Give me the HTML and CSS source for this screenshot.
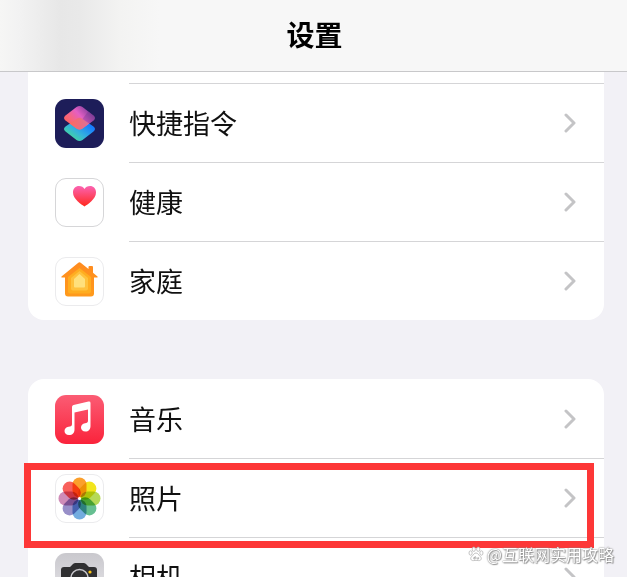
FILE: index.html
```html
<!DOCTYPE html>
<html lang="zh-CN">
<head>
    <meta charset="UTF-8">
    <meta name="viewport" content="width=device-width, initial-scale=1.0">
    <title>设置</title>
    <link rel="stylesheet" href="styles.css">
</head>
<body>
    <header class="navbar">
        <h1>设置</h1>
    </header>

    <main class="settings">
        <section class="group group-continued">
            <a class="row" href="#shortcuts">
                <svg class="app-icon" viewBox="0 0 49 49" aria-hidden="true">
                    <defs>
                        <linearGradient id="scTop" x1="0" y1=".8" x2=".9" y2=".2">
                            <stop offset="0" stop-color="#ff6052"/>
                            <stop offset=".3" stop-color="#f8657c"/>
                            <stop offset=".6" stop-color="#e45fc4"/>
                            <stop offset="1" stop-color="#7a3c98"/>
                        </linearGradient>
                        <linearGradient id="scBottom" x1=".2" y1=".9" x2=".8" y2=".3">
                            <stop offset="0" stop-color="#45d99a"/>
                            <stop offset=".45" stop-color="#35b3dc"/>
                            <stop offset="1" stop-color="#167cff"/>
                        </linearGradient>
                        <linearGradient id="scMix" x1="0" y1="0" x2="1" y2="0">
                            <stop offset="0" stop-color="#ff6a5e"/>
                            <stop offset="1" stop-color="#d9709c"/>
                        </linearGradient>
                    </defs>
                    <rect width="49" height="49" rx="11" fill="#1d1d59"/>
                    <path d="M21.500 20 L10.500 27.500 Q7.500 30 10.500 32.500 L21.500 41 Q24.500 43.200 27.500 41 L38.500 32.500 Q41.500 30 38.500 27.500 L27.500 20 Q24.500 17.800 21.500 20Z" fill="url(#scBottom)"/>
                    <path d="M21.500 8 L10.500 16.500 Q7.500 19 10.500 21.500 L21.500 29.500 Q24.500 31.500 27.500 29.500 L38.500 21.500 Q41.500 19 38.500 16.500 L27.500 8 Q24.500 5.800 21.500 8Z" fill="url(#scTop)"/>
                    <path d="M24.500 18.800 Q26 18.800 27.500 20 L34.200 24.600 L27.500 29.500 Q24.500 31.500 21.500 29.500 L14.800 24.600 L21.500 20 Q23 18.800 24.500 18.800Z" fill="url(#scMix)"/>
                    <path d="M27.500 20 L34.200 24.600 L38.500 21.500 Q41.500 19 38.500 16.500 L33 12.500Z" fill="#5d3283" opacity=".3"/>
                </svg>
                <span class="row-body">
                    <span class="label">快捷指令</span>
                    <svg class="chevron" viewBox="0 0 12 20" aria-hidden="true"><path d="M2 2l8 8-8 8"/></svg>
                </span>
            </a>
            <a class="row" href="#health">
                <svg class="app-icon" viewBox="0 0 49 49" aria-hidden="true">
                    <defs>
                        <linearGradient id="heart" x1="0" y1="0" x2="0" y2="1">
                            <stop offset="0" stop-color="#fb63b2"/>
                            <stop offset="1" stop-color="#ff281c"/>
                        </linearGradient>
                    </defs>
                    <rect x=".5" y=".5" width="48" height="48" rx="10.500" fill="#fff" stroke="#d6d6d8"/>
                    <path d="M29.500 28.500 C26.500 26.500 18 21 18 14.500 C18 10.500 20.500 8 24 8 C26.500 8 28.500 9.300 29.500 11 C30.500 9.300 32.500 8 35 8 C38.500 8 41 10.500 41 14.500 C41 21 32.500 26.500 29.500 28.500Z" fill="url(#heart)"/>
                </svg>
                <span class="row-body">
                    <span class="label">健康</span>
                    <svg class="chevron" viewBox="0 0 12 20" aria-hidden="true"><path d="M2 2l8 8-8 8"/></svg>
                </span>
            </a>
            <a class="row" href="#home">
                <svg class="app-icon" viewBox="0 0 49 49" aria-hidden="true">
                    <defs>
                        <linearGradient id="house" x1="0" y1="0" x2="0" y2="1">
                            <stop offset="0" stop-color="#ff8b1f"/>
                            <stop offset="1" stop-color="#ff9a1c"/>
                        </linearGradient>
                    </defs>
                    <rect x=".5" y=".5" width="48" height="48" rx="10.500" fill="#fff" stroke="#ebebed"/>
                    <path d="M23 6 Q24.500 4.700 26 6 L33.500 12 V10 Q33.500 9 34.500 9 H37 Q38 9 38 10 V15.700 L42.500 19.500 Q43.300 20.500 42 20.500 H39 V36.500 Q39 39.500 36 39.500 H13 Q10 39.500 10 36.500 V20.500 H7 Q5.700 20.500 6.500 19.500Z" fill="url(#house)"/>
                    <path d="M24.500 11 L36 20 V34.500 Q36 36.500 34 36.500 H15 Q13 36.500 13 34.500 V20Z" fill="#ffad20"/>
                    <path d="M24.500 14 L33 21 V31.500 Q33 33.500 31 33.500 H18 Q16 33.500 16 31.500 V21Z" fill="#ffc13d"/>
                    <path d="M24.500 17 L30 22 V29.500 Q30 30.500 29 30.500 H20 Q19 30.500 19 29.500 V22Z" fill="#ffe07c"/>
                </svg>
                <span class="row-body">
                    <span class="label">家庭</span>
                    <svg class="chevron" viewBox="0 0 12 20" aria-hidden="true"><path d="M2 2l8 8-8 8"/></svg>
                </span>
            </a>
        </section>

        <section class="group">
            <a class="row" href="#music">
                <svg class="app-icon" viewBox="0 0 49 49" aria-hidden="true">
                    <defs>
                        <linearGradient id="music" x1="0" y1="0" x2="0" y2="1">
                            <stop offset="0" stop-color="#fb5c74"/>
                            <stop offset="1" stop-color="#fa233b"/>
                        </linearGradient>
                    </defs>
                    <rect width="49" height="49" rx="11" fill="url(#music)"/>
                    <path d="M17 12 Q17 10.500 18.500 10.100 L33.500 6.600 Q35.500 6.200 35.500 8 V31 C35.500 34.500 33.500 36.500 30.500 36.500 C27.500 36.500 26 34.800 26 32.500 C26 30.300 27.500 28.800 30 28.300 C32 27.900 33 27.500 33 25.500 V14.500 L19.500 17.500 V34.500 C19.500 38 17.500 40 14 40 C11 40 9.500 38.300 9.500 36 C9.500 33.800 11 32.300 13.500 31.800 C16 31.300 17 31 17 29Z" fill="#fff"/>
                </svg>
                <span class="row-body">
                    <span class="label">音乐</span>
                    <svg class="chevron" viewBox="0 0 12 20" aria-hidden="true"><path d="M2 2l8 8-8 8"/></svg>
                </span>
            </a>
            <a class="row row-marked" href="#photos">
                <svg class="app-icon" viewBox="0 0 49 49" aria-hidden="true">
                    <rect x=".5" y=".5" width="48" height="48" rx="10.500" fill="#fff" stroke="#ebebed"/>
                    <g class="petals">
                        <rect x="17.500" y="3.500" width="14" height="20" rx="7" fill="#fb9f2c"/>
                        <rect x="17.500" y="3.500" width="14" height="20" rx="7" fill="#f2e51d" transform="rotate(45 24.500 24.500)"/>
                        <rect x="17.500" y="3.500" width="14" height="20" rx="7" fill="#b6d957" transform="rotate(90 24.500 24.500)"/>
                        <rect x="17.500" y="3.500" width="14" height="20" rx="7" fill="#66bf91" transform="rotate(135 24.500 24.500)"/>
                        <rect x="17.500" y="3.500" width="14" height="20" rx="7" fill="#73acdf" transform="rotate(180 24.500 24.500)"/>
                        <rect x="17.500" y="3.500" width="14" height="20" rx="7" fill="#988fc8" transform="rotate(225 24.500 24.500)"/>
                        <rect x="17.500" y="3.500" width="14" height="20" rx="7" fill="#cf8cb8" transform="rotate(270 24.500 24.500)"/>
                        <rect x="17.500" y="3.500" width="14" height="20" rx="7" fill="#f8605c" transform="rotate(315 24.500 24.500)"/>
                    </g>
                    <circle cx="24.500" cy="24.500" r="1.500" fill="#fff"/>
                </svg>
                <span class="row-body">
                    <span class="label">照片</span>
                    <svg class="chevron" viewBox="0 0 12 20" aria-hidden="true"><path d="M2 2l8 8-8 8"/></svg>
                </span>
            </a>
            <a class="row" href="#camera">
                <svg class="app-icon" viewBox="0 0 49 49" aria-hidden="true">
                    <defs>
                        <linearGradient id="camera" x1="0" y1="0" x2="0" y2="1">
                            <stop offset="0" stop-color="#c9c8cd"/>
                            <stop offset="1" stop-color="#e9e8ec"/>
                        </linearGradient>
                    </defs>
                    <rect width="49" height="49" rx="11" fill="url(#camera)"/>
                    <path d="M9 14 H15 L18 11 Q19 10 20.500 10 H28.500 Q30 10 31 11 L34 14 H39 Q42 14 42 17 V35 Q42 38 39 38 H9 Q6 38 6 35 V17 Q6 14 9 14Z" fill="#303032"/>
                    <circle cx="24.500" cy="25" r="8.500" fill="#303032" stroke="#c9c8cd" stroke-width="1.500"/>
                    <circle cx="35" cy="19" r="1.600" fill="#ffc711"/>
                </svg>
                <span class="row-body">
                    <span class="label">相机</span>
                    <svg class="chevron" viewBox="0 0 12 20" aria-hidden="true"><path d="M2 2l8 8-8 8"/></svg>
                </span>
            </a>
        </section>
    </main>

    <div class="watermark">
        <svg class="paw" viewBox="0 0 16 16" aria-hidden="true">
            <ellipse cx="2.600" cy="7" rx="1.600" ry="2.200"/>
            <ellipse cx="5.800" cy="3.200" rx="1.600" ry="2.200"/>
            <ellipse cx="10.200" cy="3.200" rx="1.600" ry="2.200"/>
            <ellipse cx="13.400" cy="7" rx="1.600" ry="2.200"/>
            <path d="M8 7 C10 7 10.500 9 12 10.200 C14.500 12.200 13 15 10.500 14.600 Q8 14 5.500 14.600 C3 15 1.500 12.200 4 10.200 C5.500 9 6 7 8 7Z"/>
            <path class="paw-mark" d="M7.200 10v3H5.800v-1.500h1.400M9 11.200V13h1.600v-1.800"/>
        </svg>
        <span>@互联网实用攻略</span>
    </div>
</body>
</html>
```

FILE: styles.css
```css
* {
    margin: 0;
    padding: 0;
    box-sizing: border-box;
}

body {
    height: 100vh;
    overflow: hidden;
    display: flex;
    flex-direction: column;
    background: #f2f1f6;
    color: #111;
    font-family: "Noto Sans CJK SC", "Noto Sans", sans-serif;
}

.navbar {
    flex: none;
    height: 72px;
    display: flex;
    align-items: center;
    justify-content: center;
    padding: 0 0 4px 2px;
    background: linear-gradient(90deg, #f6f6f5 0, #f2f2f2 20px, #e7e7e7 60px, #e9e9e9 80px, #f3f3f2 120px, #f7f7f7 160px);
    border-bottom: 1px solid #c8c8ca;
}

.navbar h1 {
    font-size: 28px;
    font-weight: 700;
    line-height: 40px;
    color: #000;
}

.settings {
    flex: 1;
    min-height: 0;
    overflow: hidden;
    padding: 0 23px 0 28px;
}

.group {
    background: #fff;
    border-radius: 16px;
    margin-bottom: 59px;
}

/* scrolled under the navbar */
.group-continued {
    padding-top: 11px;
    border-radius: 0 0 16px 16px;
}

.row {
    position: relative;
    display: flex;
    align-items: center;
    gap: 25px;
    height: 79px;
    padding-left: 27px;
    color: inherit;
    text-decoration: none;
}

.app-icon {
    flex: none;
    width: 49px;
    height: 49px;
    margin-top: 2px;
}

.petals {
    isolation: isolate;
}

.petals rect {
    mix-blend-mode: multiply;
}

.row-body {
    flex: 1;
    height: 100%;
    display: flex;
    align-items: center;
    justify-content: space-between;
    padding-right: 28px;
    border-top: 1px solid #d5d5d7;
}

.group:not(.group-continued) .row:first-child .row-body {
    border-top-color: transparent;
}

.label {
    font-size: 27px;
    line-height: 40px;
}

.chevron {
    width: 12px;
    height: 20px;
    fill: none;
    stroke: #c4c4c6;
    stroke-width: 3;
    stroke-linecap: round;
    stroke-linejoin: round;
}

.row-marked::after {
    content: "";
    position: absolute;
    top: 5px;
    right: 10px;
    bottom: -11px;
    left: -4px;
    border: 7px solid #fd3737;
    z-index: 1;
}

.watermark {
    position: absolute;
    right: 13px;
    bottom: 11px;
    z-index: 2;
    display: flex;
    align-items: center;
    gap: 3px;
    color: #fff;
    font-size: 16px;
    line-height: 24px;
    text-shadow: 0 0 1px #888, 0 0 2px #888, 1px 1px 1px #999;
}

.paw {
    width: 16px;
    height: 16px;
    fill: #fff;
    stroke: #aaa;
    stroke-width: 0.7;
}

.paw-mark {
    fill: none;
    stroke: #999;
}
```
